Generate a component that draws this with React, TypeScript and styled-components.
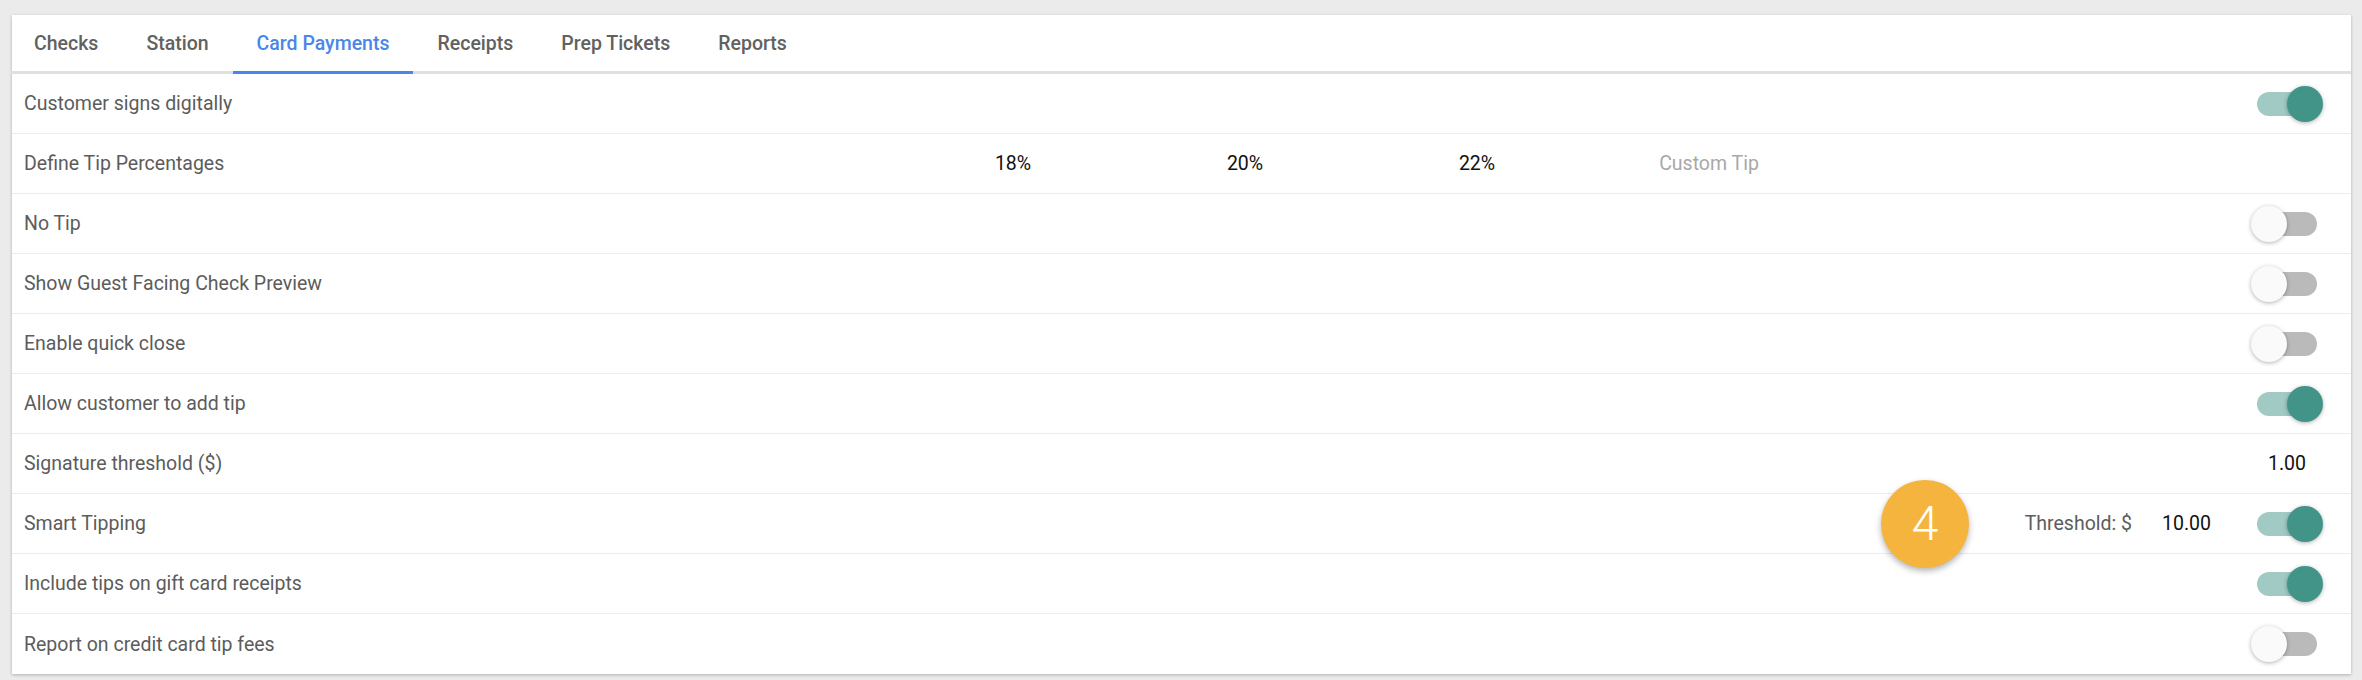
import React from 'react';
import styled, { createGlobalStyle } from 'styled-components';

const GlobalStyle = createGlobalStyle`
    html, body {
        margin: 0;
        padding: 0;
        background: #ebebeb;
        font-family: Roboto, "Liberation Sans", Arial, sans-serif;
    }
    * {
        box-sizing: border-box;
    }
`

const tabs = ['Checks', 'Station', 'Card Payments', 'Receipts', 'Prep Tickets', 'Reports'];
const tips = ['18%', '20%', '22%'];

const Switch = ({ on }: { on: boolean }) => (
    <StyledSwitch>
        <StyledTrack $on={on} />
        <StyledThumb $on={on} />
    </StyledSwitch>
);

const App = () => {
    return (
        <StyledPage>
            <GlobalStyle />
            <StyledCard>
                <StyledTabBar>
                    {tabs.map((t) => (
                        <StyledTab key={t} $active={t === 'Card Payments'}>{t}</StyledTab>
                    ))}
                </StyledTabBar>

                <StyledRow>
                    <StyledLabel>Customer signs digitally</StyledLabel>
                    <Switch on />
                </StyledRow>

                <StyledRow>
                    <StyledLabel>Define Tip Percentages</StyledLabel>
                    <StyledTipGroup>
                        {tips.map((t) => (
                            <StyledTip key={t}>{t}</StyledTip>
                        ))}
                        <StyledTip $placeholder>Custom Tip</StyledTip>
                    </StyledTipGroup>
                </StyledRow>

                <StyledRow>
                    <StyledLabel>No Tip</StyledLabel>
                    <Switch on={false} />
                </StyledRow>

                <StyledRow>
                    <StyledLabel>Show Guest Facing Check Preview</StyledLabel>
                    <Switch on={false} />
                </StyledRow>

                <StyledRow>
                    <StyledLabel>Enable quick close</StyledLabel>
                    <Switch on={false} />
                </StyledRow>

                <StyledRow>
                    <StyledLabel>Allow customer to add tip</StyledLabel>
                    <Switch on />
                </StyledRow>

                <StyledRow>
                    <StyledLabel>Signature threshold ($)</StyledLabel>
                    <StyledValue>1.00</StyledValue>
                </StyledRow>

                <StyledRow>
                    <StyledLabel>Smart Tipping</StyledLabel>
                    <StyledBadge>4</StyledBadge>
                    <StyledThresholdLabel>Threshold: $</StyledThresholdLabel>
                    <StyledThresholdValue>10.00</StyledThresholdValue>
                    <Switch on />
                </StyledRow>

                <StyledRow>
                    <StyledLabel>Include tips on gift card receipts</StyledLabel>
                    <Switch on />
                </StyledRow>

                <StyledRow $last>
                    <StyledLabel>Report on credit card tip fees</StyledLabel>
                    <Switch on={false} />
                </StyledRow>
            </StyledCard>
        </StyledPage>
    );
};

const StyledPage = styled.div`
    padding: 15px 11px 5px 12px;
    min-height: 680px;
`

const StyledCard = styled.div`
    background: #fff;
    box-shadow: 0 1px 3px rgba(0, 0, 0, 0.25);
`

const StyledTabBar = styled.div`
    display: flex;
    height: 59px;
    padding-left: 0;
    margin-left: -2px;
    border-bottom: 3px solid #e0e0e0;
`

const StyledTab = styled.div<{ $active?: boolean }>`
    display: flex;
    align-items: center;
    padding: 0 24px;
    margin-bottom: -3px;
    font-size: 19.5px;
    font-weight: 500;
    color: ${(p) => (p.$active ? '#4a86e8' : '#616161')};
    border-bottom: 3px solid ${(p) => (p.$active ? '#4a86e8' : 'transparent')};
`

const StyledRow = styled.div<{ $last?: boolean }>`
    position: relative;
    display: flex;
    align-items: center;
    height: 60px;
    padding: 0 34px 0 12px;
    border-bottom: ${(p) => (p.$last ? 'none' : '1px solid #ececec')};
    font-size: 19.5px;
`

const StyledLabel = styled.div`
    flex: 1;
    color: #5c5c5c;
`

const StyledTipGroup = styled.div`
    display: flex;
    margin-right: 492px;
`

const StyledTip = styled.div<{ $placeholder?: boolean }>`
    width: 232px;
    text-align: center;
    color: ${(p) => (p.$placeholder ? '#a8a8a8' : '#111')};
`

const StyledValue = styled.div`
    color: #111;
    margin-right: 11px;
`

const StyledThresholdLabel = styled.div`
    color: #5c5c5c;
`

const StyledThresholdValue = styled.div`
    color: #111;
    margin: 0 46px 0 30px;
`

const StyledBadge = styled.div`
    position: absolute;
    right: 382px;
    top: 50%;
    transform: translateY(-50%);
    width: 88px;
    height: 88px;
    border-radius: 50%;
    background: #f4b43e;
    color: #fff;
    display: flex;
    align-items: center;
    justify-content: center;
    font-size: 48px;
    font-weight: 300;
    box-shadow: 0 3px 6px rgba(0, 0, 0, 0.3);
    z-index: 2;
`

const StyledSwitch = styled.div`
    position: relative;
    width: 60px;
    height: 36px;
    display: flex;
    align-items: center;
`

const StyledTrack = styled.div<{ $on: boolean }>`
    width: 60px;
    height: 24px;
    border-radius: 12px;
    background: ${(p) => (p.$on ? '#a0cac3' : '#bababa')};
`

const StyledThumb = styled.div<{ $on: boolean }>`
    position: absolute;
    top: 0;
    left: ${(p) => (p.$on ? '30px' : '-6px')};
    width: 36px;
    height: 36px;
    border-radius: 50%;
    background: ${(p) => (p.$on ? '#429488' : '#fafafa')};
    box-shadow: 0 1px 4px rgba(0, 0, 0, 0.3);
`

export default App;
